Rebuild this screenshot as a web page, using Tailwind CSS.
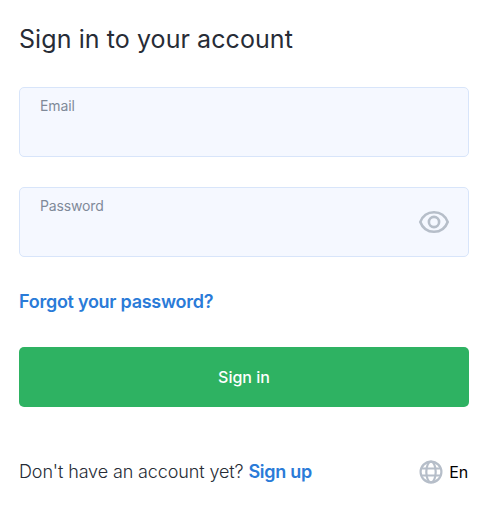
<!DOCTYPE html>
<html lang="en">

<head>
    <meta charset="UTF-8">
    <meta name="viewport" content="width=device-width, initial-scale=1.0">
    <title>Sign in</title>

    <script src="https://cdn.jsdelivr.net/npm/@tailwindcss/browser@4"></script>
</head>

<body class="bg-white font-['Inter',sans-serif] text-[#272c36]">
    <form class="w-[450px] ml-[19px] pt-[23px]">
        <h1 class="text-[25px] leading-8 tracking-[0.08px]">Sign in to your account</h1>

        <label class="block h-[70px] mt-8 px-5 pt-2 rounded-[5px] border border-[#d8e5fa] bg-[#f5f8ff]">
            <span class="block text-sm tracking-[-0.1px] text-[#7f8a99]">Email</span>
        </label>

        <label class="flex justify-between h-[70px] mt-[30px] pl-5 pr-[18px] pt-2 rounded-[5px] border border-[#d8e5fa] bg-[#f5f8ff]">
            <span class="block text-sm tracking-[-0.15px] text-[#7f8a99]">Password</span>
            <svg class="w-8 h-8 mt-[10px]" viewBox="0 0 32 32" fill="none" stroke="#b6bec9" stroke-width="2.6">
                <path d="M2.3 16C4.6 9.9 9.8 6.2 16 6.2S27.4 9.9 29.7 16C27.4 22.1 22.2 25.8 16 25.8S4.6 22.1 2.3 16Z" />
                <circle cx="16" cy="16" r="5.1" />
            </svg>
        </label>

        <a href="#" class="block mt-8 text-lg leading-[26px] font-semibold tracking-[-0.27px] text-[#2a7bd8]">Forgot your password?</a>

        <button type="button" class="block w-full h-[60px] mt-8 rounded-[5px] bg-[#2eb262] text-white font-medium">Sign in</button>

        <div class="flex items-center justify-between mt-[52px]">
            <p class="text-lg leading-[26px] font-light tracking-[-0.12px]">Don't have an account yet? <a href="#" class="font-semibold tracking-[-0.27px] text-[#2a7bd8]">Sign up</a></p>
            <div class="flex items-center gap-[6.5px] text-black tracking-[-0.1px] mr-px">
                <svg class="w-6 h-6" viewBox="0 0 24 24" fill="none" stroke="#b6bec9" stroke-width="2.2">
                    <circle cx="12" cy="12" r="10.4" />
                    <ellipse cx="12" cy="12" rx="4.7" ry="10.4" />
                    <path d="M2 8.5h20M2 15.5h20" />
                </svg>
                <span>En</span>
            </div>
        </div>
    </form>
</body>

</html>
